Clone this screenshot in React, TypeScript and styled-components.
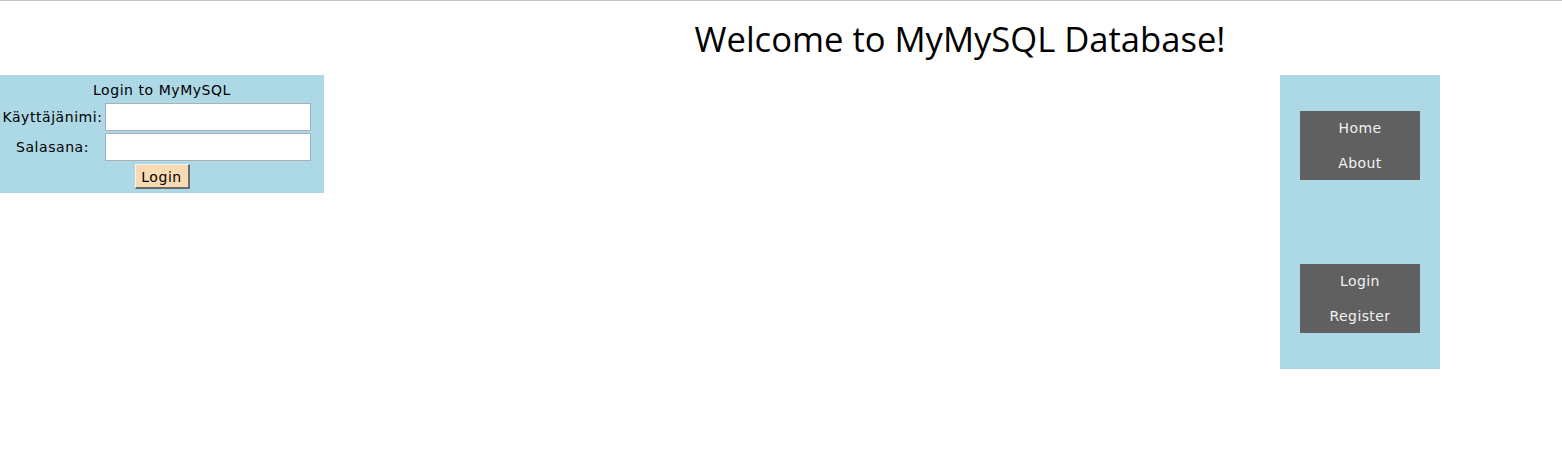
import React from "react";
import styled, { createGlobalStyle } from "styled-components";

const Global = createGlobalStyle`
  html, body { margin: 0; padding: 0; background: #ffffff; }
  body { font-family: "DejaVu Sans", Verdana, sans-serif; }
`;

const Page = styled.div`
  border-top: 1px solid #c3c3c3;
  width: 1562px;
  height: 464px;
  box-sizing: border-box;
`;

const Header = styled.header`
  display: flex;
  justify-content: center;
  padding-left: 358px;
  height: 74px;
  box-sizing: border-box;
`;

const Title = styled.h1`
  margin: 0;
  padding-top: 14px;
  font-family: "Open Sans", "Noto Sans", sans-serif;
  font-weight: 400;
  font-size: 34.6px;
  line-height: 48px;
  color: #000;
`;

const Body = styled.div`
  display: flex;
  align-items: flex-start;
`;

const LoginPanel = styled.form`
  width: 324px;
  background: #add8e6;
  display: grid;
  grid-template-columns: 105px 206px;
  grid-auto-rows: auto;
  row-gap: 2px;
  padding-bottom: 4px;
  font-size: 14px;
  letter-spacing: 0.55px;
  color: #000;
`;

const PanelTitle = styled.div`
  grid-column: 1 / -1;
  width: 324px;
  text-align: center;
  line-height: 28px;
  height: 26px;
  padding-top: 1px;
  box-sizing: border-box;
`;

const Label = styled.label`
  text-align: center;
  line-height: 27px;
  padding-top: 1px;
  height: 28px;
  box-sizing: border-box;
  white-space: nowrap;
`;

const Field = styled.input`
  box-sizing: border-box;
  width: 206px;
  height: 28px;
  border: 1px solid #a9b0b6;
  background: #fff;
  margin: 0;
  padding: 0 3px;
  font: inherit;
`;

const ButtonRow = styled.div`
  grid-column: 1 / -1;
  width: 324px;
  display: flex;
  justify-content: center;
  padding-top: 1px;
`;

const LoginButton = styled.button`
  box-sizing: border-box;
  width: 55px;
  height: 25px;
  margin: 0;
  padding: 2px 0 0;
  background: #f8dbb3;
  border-style: solid;
  border-width: 1px 2px 2px 1px;
  border-color: #f4f4f4 #6a6a6a #6a6a6a #f4f4f4;
  font-family: "DejaVu Sans", Verdana, sans-serif;
  font-size: 14px;
  letter-spacing: 0.55px;
  color: #000;
`;

const Spacer = styled.div`
  flex: 0 0 956px;
`;

const SidePanel = styled.nav`
  width: 160px;
  box-sizing: border-box;
  background: #add8e6;
  padding: 36px 20px;
  display: flex;
  flex-direction: column;
  gap: 84px;
`;

const MenuBox = styled.ul`
  list-style: none;
  margin: 0;
  padding: 0;
  background: #606060;
  height: 69px;
  display: flex;
  flex-direction: column;
`;

const MenuItem = styled.li`
  flex: 1;
  display: flex;
  align-items: center;
  justify-content: center;
  color: #f2f2f2;
  font-size: 14px;
  letter-spacing: 0.4px;
`;

export default function App() {
  return (
    <>
      <Global />
      <Page>
        <Header>
          <Title>Welcome to MyMySQL Database!</Title>
        </Header>
        <Body>
          <LoginPanel onSubmit={(e) => e.preventDefault()}>
            <PanelTitle>Login to MyMySQL</PanelTitle>
            <Label htmlFor="user">Käyttäjänimi:</Label>
            <Field id="user" type="text" />
            <Label htmlFor="pass">Salasana:</Label>
            <Field id="pass" type="password" />
            <ButtonRow>
              <LoginButton type="submit">Login</LoginButton>
            </ButtonRow>
          </LoginPanel>
          <Spacer />
          <SidePanel>
            <MenuBox>
              <MenuItem>Home</MenuItem>
              <MenuItem>About</MenuItem>
            </MenuBox>
            <MenuBox>
              <MenuItem>Login</MenuItem>
              <MenuItem>Register</MenuItem>
            </MenuBox>
          </SidePanel>
        </Body>
      </Page>
    </>
  );
}
